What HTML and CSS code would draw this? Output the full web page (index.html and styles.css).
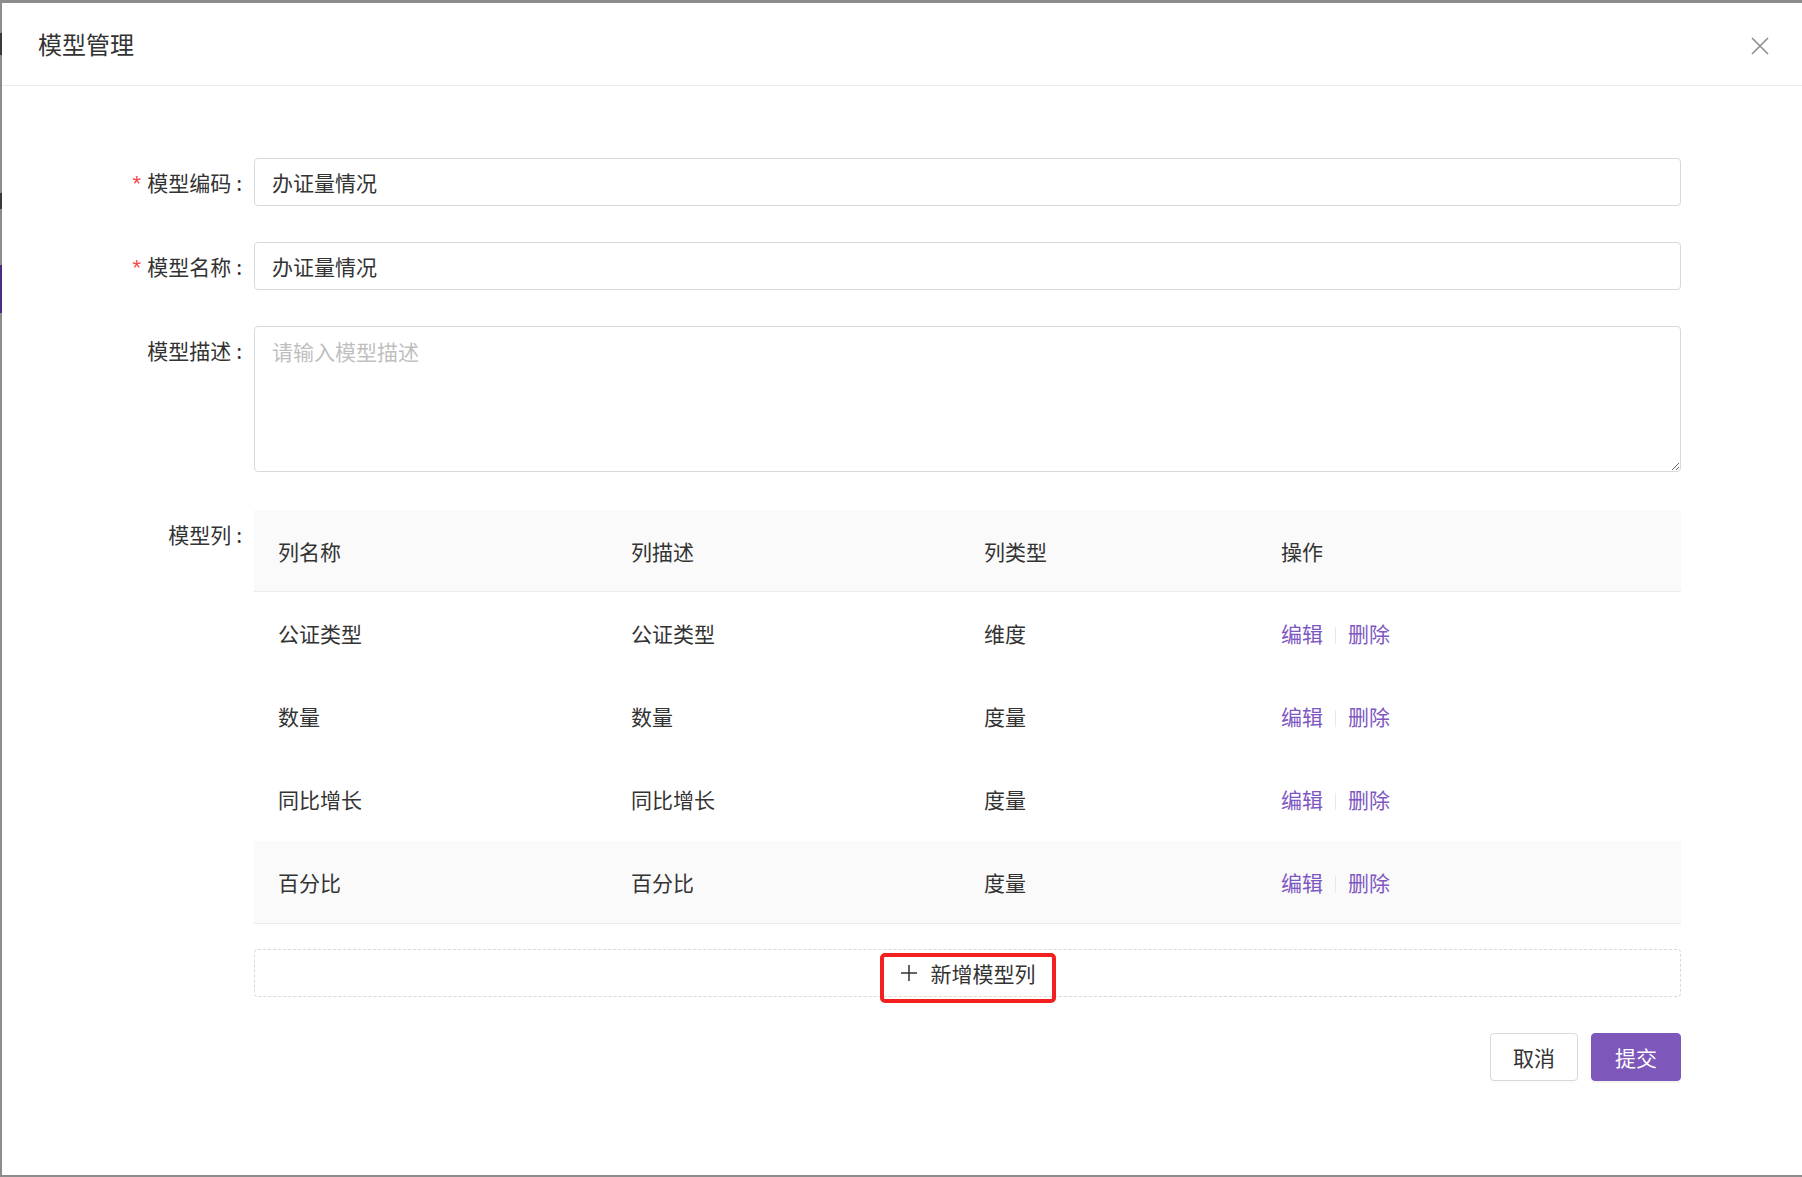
FILE: index.html
```html
<!DOCTYPE html>
<html lang="zh-CN">
<head>
<meta charset="utf-8">
<title>模型管理</title>
<link rel="stylesheet" href="styles.css">
</head>
<body>
<div class="screen">
  <div class="underlay">
    <span class="mark mark-a"></span>
    <span class="mark mark-b"></span>
    <span class="nav-active"></span>
  </div>
  <div class="modal">
    <div class="modal-header">
      <div class="modal-title">模型管理</div>
      <button class="close" type="button" aria-label="关闭">
        <svg width="18" height="18" viewBox="0 0 18 18"><path d="M1 1L17 17M17 1L1 17" stroke="#8c8c8c" stroke-width="1.6" fill="none"/></svg>
      </button>
    </div>
    <div class="modal-body">
      <div class="form-row">
        <label class="label"><span class="req">*</span>模型编码<span class="colon">:</span></label>
        <div class="control"><input class="input" value="办证量情况"></div>
      </div>
      <div class="form-row">
        <label class="label"><span class="req">*</span>模型名称<span class="colon">:</span></label>
        <div class="control"><input class="input" value="办证量情况"></div>
      </div>
      <div class="form-row desc">
        <label class="label">模型描述<span class="colon">:</span></label>
        <div class="control"><textarea class="textarea" placeholder="请输入模型描述"></textarea></div>
      </div>
      <div class="form-row last">
        <label class="label">模型列<span class="colon">:</span></label>
        <div class="control">
          <table class="table">
            <thead>
              <tr><th class="c1">列名称</th><th class="c2">列描述</th><th class="c3">列类型</th><th class="c4">操作</th></tr>
            </thead>
            <tbody>
              <tr><td>公证类型</td><td>公证类型</td><td>维度</td><td><a class="link">编辑</a><span class="sep"></span><a class="link">删除</a></td></tr>
              <tr><td>数量</td><td>数量</td><td>度量</td><td><a class="link">编辑</a><span class="sep"></span><a class="link">删除</a></td></tr>
              <tr><td>同比增长</td><td>同比增长</td><td>度量</td><td><a class="link">编辑</a><span class="sep"></span><a class="link">删除</a></td></tr>
              <tr class="hover"><td>百分比</td><td>百分比</td><td>度量</td><td><a class="link">编辑</a><span class="sep"></span><a class="link">删除</a></td></tr>
            </tbody>
          </table>
          <button class="add-btn" type="button">
            <span class="add-inner">
              <svg width="16" height="16" viewBox="0 0 16 16"><path d="M8 0V16M0 8H16" stroke="#333" stroke-width="1.5" fill="none"/></svg>
              <span>新增模型列</span>
            </span>
          </button>
          <div class="actions">
            <button class="btn" type="button">取消</button>
            <button class="btn primary" type="button">提交</button>
          </div>
        </div>
      </div>
    </div>
  </div>
</div>
</body>
</html>
```
FILE: styles.css
```css
html, body {
  margin: 0;
  padding: 0;
}
body {
  background: #8c8c8c;
  font-family: "Noto Sans CJK SC", "Noto Sans", "Liberation Sans", sans-serif;
  color: #333;
}
.screen {
  display: flex;
  height: 1177px;
  padding: 3px 0 2px 0;
  box-sizing: border-box;
}
.underlay {
  width: 2px;
  flex: none;
  display: flex;
  flex-direction: column;
}
.mark {
  display: block;
  background: #3a3a3a;
}
.mark-a {
  height: 22px;
  margin-top: 30px;
}
.mark-b {
  height: 16px;
  margin-top: 138px;
}
.nav-active {
  display: block;
  height: 48px;
  margin-top: 56px;
  background: #4b2d7f;
}
.modal {
  flex: 1;
  background: #fff;
  display: flex;
  flex-direction: column;
}
.modal-header {
  height: 82px;
  border-bottom: 1px solid #ebebeb;
  display: flex;
  align-items: center;
  justify-content: space-between;
  padding: 0 33px 0 36px;
}
.modal-title {
  font-size: 24px;
  line-height: 32px;
  color: #333;
}
.close {
  border: 0;
  background: none;
  padding: 0;
  width: 18px;
  height: 18px;
  display: flex;
  margin-top: 4px;
}
.modal-body {
  padding: 72px 121px 0 0;
}
.form-row {
  display: flex;
  align-items: flex-start;
  margin-bottom: 36px;
}
.form-row.desc {
  margin-bottom: 38px;
}
.form-row.last {
  margin-bottom: 0;
}
.label {
  display: block;
  width: 252px;
  height: 48px;
  flex: none;
  text-align: right;
  font-size: 21px;
  line-height: 48px;
  color: #333;
  white-space: nowrap;
  overflow: hidden;
}
.req {
  color: #f5484a;
  margin-right: 6px;
  font-family: "Liberation Sans", sans-serif;
  font-size: 22px;
  line-height: 0;
}
.colon {
  margin: 0 12px 0 5px;
}
.control {
  flex: 1;
  min-width: 0;
}
.input {
  display: block;
  width: 100%;
  height: 48px;
  box-sizing: border-box;
  border: 1px solid #d9d9d9;
  border-radius: 4px;
  padding: 0 17px;
  font-family: inherit;
  font-size: 21px;
  color: #333;
  outline: none;
}
.textarea {
  display: block;
  width: 100%;
  height: 146px;
  box-sizing: border-box;
  border: 1px solid #d9d9d9;
  border-radius: 4px;
  padding: 8px 17px;
  font-family: inherit;
  font-size: 21px;
  line-height: 32px;
  color: #333;
  resize: vertical;
  outline: none;
}
.textarea::placeholder {
  color: #bfbfbf;
}
.table {
  width: 100%;
  border-collapse: separate;
  border-spacing: 0;
  table-layout: fixed;
  font-size: 21px;
}
.table th {
  background: #fafafa;
  font-weight: normal;
  text-align: left;
  color: #333;
  line-height: 32px;
  padding: 25px 24px 24px;
  border-bottom: 1px solid #ebebeb;
}
.table td {
  line-height: 32px;
  padding: 25px 24px;
  color: #333;
  border-bottom: 1px solid transparent;
}
.table tr.hover td {
  background: #fafafa;
  border-bottom-color: #ebebeb;
}
.c1 { width: 305px; }
.c2 { width: 305px; }
.c3 { width: 249px; }
.link {
  color: #7e57c2;
  cursor: pointer;
}
.sep {
  display: inline-block;
  width: 1px;
  height: 17px;
  background: #e8e8e8;
  margin: 0 12px;
  vertical-align: -2px;
}
.add-btn {
  display: flex;
  align-items: center;
  justify-content: center;
  width: 100%;
  height: 48px;
  margin-top: 25px;
  border: 1px dashed #d9d9d9;
  border-radius: 4px;
  background: #fff;
  font-family: inherit;
  font-size: 21px;
  color: #333;
  padding: 0;
}
.add-inner {
  position: relative;
  display: flex;
  align-items: center;
  gap: 14px;
  line-height: 32px;
  margin-left: 1px;
}
.add-inner::after {
  content: "";
  position: absolute;
  left: -21px;
  right: -20px;
  top: -4px;
  bottom: -14px;
  border: 4px solid #f41f1f;
  border-radius: 5px;
}
.actions {
  display: flex;
  justify-content: flex-end;
  gap: 13px;
  margin-top: 36px;
}
.btn {
  height: 48px;
  padding: 0 22px;
  border: 1px solid #d9d9d9;
  border-radius: 4px;
  background: #fff;
  font-family: inherit;
  font-size: 21px;
  color: #333;
  box-shadow: 0 2px 0 rgba(0, 0, 0, 0.015);
}
.btn.primary {
  background: #7e57bb;
  border-color: #7e57bb;
  color: #fff;
  padding: 0 23px;
  box-shadow: 0 2px 0 rgba(0, 0, 0, 0.045);
}
```
